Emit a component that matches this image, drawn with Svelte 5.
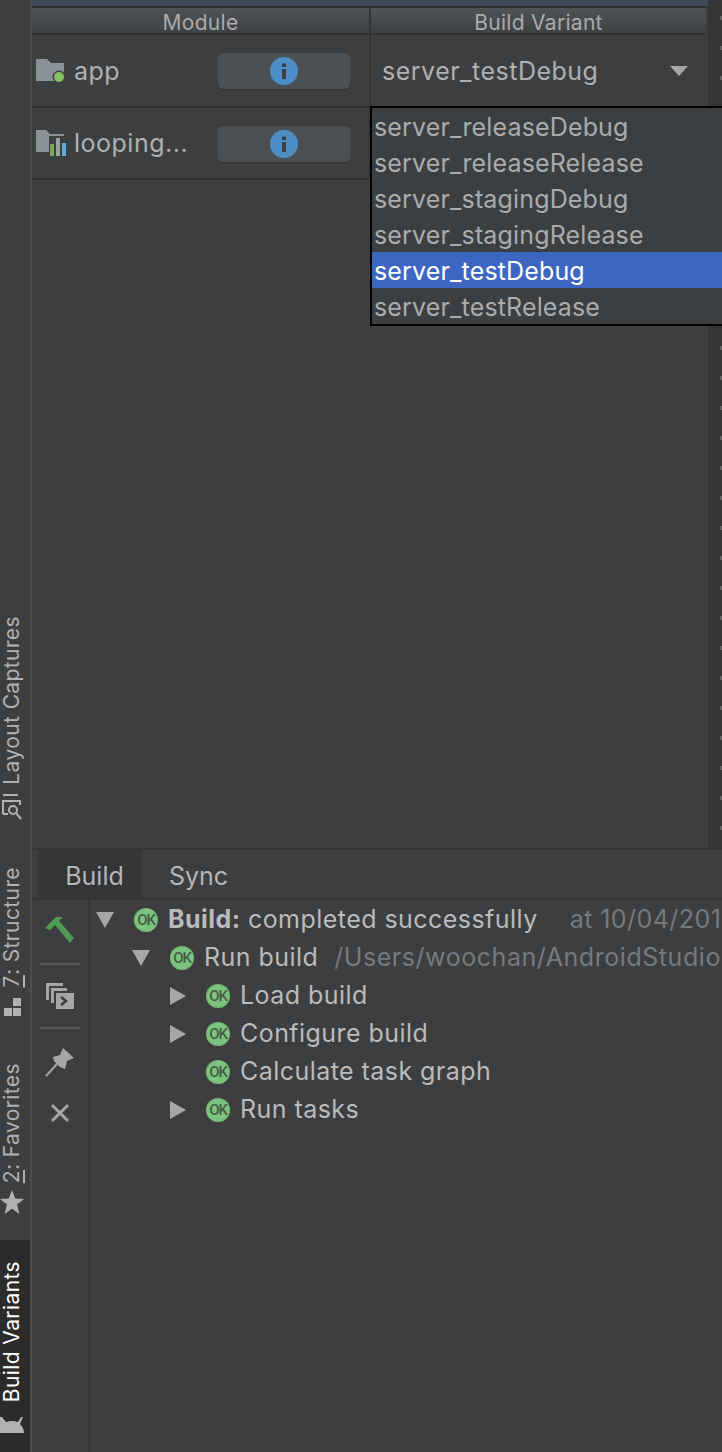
<script lang="ts">
  const variants = [
    'server_releaseDebug',
    'server_releaseRelease',
    'server_stagingDebug',
    'server_stagingRelease',
    'server_testDebug',
    'server_testRelease'
  ];
  const selected = 'server_testDebug';

  const tree = [
    { arrow: 'right', label: 'Load build' },
    { arrow: 'right', label: 'Configure build' },
    { arrow: '', label: 'Calculate task graph' },
    { arrow: 'right', label: 'Run tasks' }
  ];
</script>

{#snippet okBadge()}
  <span class="ok">OK</span>
{/snippet}

{#snippet infoButton()}
  <button class="info-btn" aria-label="info">
    <svg width="28" height="28" viewBox="0 0 28 28">
      <circle cx="14" cy="14" r="14" fill="#4b8fc6" />
      <rect x="12" y="6.5" width="4" height="3.5" fill="#3c3f41" />
      <rect x="12" y="12" width="4" height="10" fill="#3c3f41" />
    </svg>
  </button>
{/snippet}

{#snippet twisty(dir: string)}
  <svg class="twisty" width="20" height="20" viewBox="0 0 20 20">
    {#if dir === 'down'}
      <polygon points="1,2 19,2 10,18" fill="#a6a6a6" />
    {:else if dir === 'right'}
      <polygon points="3,1 19,10 3,19" fill="#a6a6a6" />
    {/if}
  </svg>
{/snippet}

<div class="window">
  <aside class="stripe">
    <div class="side-item captures">
      <svg width="24" height="26" viewBox="0 0 24 26" fill="none" stroke="#afb1b3" stroke-width="2">
        <path d="M3 1H18" />
        <path d="M3 20V7H20V11" />
        <path d="M3 20H8" />
        <circle cx="13" cy="16" r="4" />
        <path d="M16 19L21 25" />
      </svg>
      <span class="vtext">Layout Captures</span>
    </div>
    <div class="side-item structure">
      <svg width="20" height="18" viewBox="0 0 20 18" fill="#afb1b3">
        <rect x="2" y="10" width="8" height="8" />
        <rect x="11" y="10" width="8" height="8" />
        <rect x="11" y="0" width="8" height="8" />
      </svg>
      <span class="vtext"><u>7</u>: Structure</span>
    </div>
    <div class="side-item favorites">
      <svg width="24" height="25" viewBox="0 0 24 25" fill="#afb1b3">
        <polygon points="12,0 15.200,8.600 24,9 17,14.600 19.500,24 12,18.800 4.500,24 7,14.600 0,9 8.800,8.600" />
      </svg>
      <span class="vtext"><u>2</u>: Favorites</span>
    </div>
    <div class="side-item variants">
      <svg class="android" width="24" height="16" viewBox="0 0 24 16" fill="#afb1b3">
        <path d="M0 0L2 0L6 5C9 3.500 15 3.500 18 5L21 0L23 0L20 7C22 9 24 12 24 16L0 16Z" />
      </svg>
      <span class="vtext">Build Variants</span>
    </div>
  </aside>

  <main class="content">
    <div class="top-strip"></div>

    <section class="variants-panel">
      <div class="table">
        <div class="thead">
          <div class="th col-module">Module</div>
          <div class="th col-variant">Build Variant</div>
        </div>
        <div class="row">
          <div class="cell col-module">
            <svg class="folder" width="30" height="24" viewBox="0 0 30 24">
              <path d="M0 0H11L15 4H28V22H0Z" fill="#8a9199" />
              <circle cx="23" cy="18" r="6.500" fill="#3d3e40" />
              <circle cx="23" cy="18" r="5" fill="#87c060" />
            </svg>
            <span class="name">app</span>
            {@render infoButton()}
          </div>
          <div class="cell col-variant select-cell">
            <span>server_testDebug</span>
            <svg width="18" height="10" viewBox="0 0 18 10"><polygon points="0,0 18,0 9,10" fill="#a6a6a6" /></svg>
          </div>
        </div>
        <div class="row">
          <div class="cell col-module">
            <svg class="folder" width="30" height="26" viewBox="0 0 30 26">
              <path d="M0 0H10L14 4H28V6H13V22H0Z" fill="#8a9199" />
              <rect x="14" y="14" width="4" height="12" fill="#75a84f" />
              <rect x="20" y="8" width="4" height="18" fill="#9aa0a6" />
              <rect x="26" y="13" width="4" height="13" fill="#5aaed8" />
            </svg>
            <span class="name">looping...</span>
            {@render infoButton()}
          </div>
          <div class="cell col-variant"></div>
        </div>
      </div>
      <div class="scroll-gutter"></div>

      <ul class="dropdown">
        {#each variants as v}
          <li class:active={v === selected}>{v}</li>
        {/each}
      </ul>
    </section>

    <section class="build-panel">
      <div class="tabs">
        <div class="tab on">Build</div>
        <div class="tab">Sync</div>
      </div>
      <div class="build-body">
        <div class="toolbar">
          <svg class="hammer" width="32" height="30" viewBox="0 0 32 30">
            <path d="M1 13L12 2H19L15 6L30 23L26 28L11 10L6 15Z" fill="#4f9a55" />
          </svg>
          <div class="tool-sep"></div>
          <svg width="28" height="26" viewBox="0 0 28 26">
            <path d="M0 0H17V3H3V17H0Z" fill="#a6a6a6" />
            <path d="M5 5H21V8H8V20H5Z" fill="#a6a6a6" />
            <rect x="10" y="10" width="18" height="16" fill="#a6a6a6" />
            <path d="M15 14L20 18L15 22" fill="none" stroke="#3c3f41" stroke-width="2.500" />
          </svg>
          <div class="tool-sep"></div>
          <svg width="30" height="30" viewBox="0 0 30 30">
            <path d="M18 1L29 11L22 14L20 22L15 20L9 14L8 10L15 8Z" fill="#a6a6a6" />
            <path d="M12 17L1 29" stroke="#a6a6a6" stroke-width="2" />
          </svg>
          <svg class="close" width="20" height="20" viewBox="0 0 20 20">
            <path d="M2 2L18 18M18 2L2 18" stroke="#a6a6a6" stroke-width="3" />
          </svg>
        </div>
        <div class="tree">
          <div class="node lvl0">
            {@render twisty('down')}
            {@render okBadge()}
            <span class="lbl"><b>Build:</b> completed successfully</span>
            <span class="dim when">at 10/04/201</span>
          </div>
          <div class="node lvl1">
            {@render twisty('down')}
            {@render okBadge()}
            <span class="lbl">Run build</span>
            <span class="dim path">/Users/woochan/AndroidStudio</span>
          </div>
          {#each tree as t}
            <div class="node lvl2">
              {@render twisty(t.arrow)}
              {@render okBadge()}
              <span class="lbl">{t.label}</span>
            </div>
          {/each}
        </div>
      </div>
    </section>
  </main>
</div>

<style>
  :global(body) {
    margin: 0;
    background: #3d3e40;
  }

  .window {
    display: flex;
    width: 722px;
    height: 1452px;
    overflow: hidden;
    background: #3d3e40;
    color: #bbbbbb;
    font-family: Inter, "Liberation Sans", sans-serif;
    font-size: 25px;
  }

  .stripe {
    flex: none;
    width: 30px;
    box-sizing: content-box;
    display: flex;
    flex-direction: column;
    justify-content: flex-end;
    border-right: 2px solid #4b4d4f;
  }

  .side-item {
    display: flex;
    flex-direction: column-reverse;
    align-items: center;
    gap: 10px;
    padding-right: 7px;
    font-size: 21px;
    letter-spacing: 0.4px;
    color: #afb1b3;
  }

  .vtext {
    writing-mode: vertical-rl;
    transform: rotate(180deg);
    line-height: 22px;
    white-space: nowrap;
  }

  .captures {
    margin-bottom: 47px;
  }

  .structure {
    margin-bottom: 47px;
  }

  .favorites {
    margin-bottom: 25px;
    gap: 7px;
  }

  .variants {
    height: 212px;
    gap: 15px;
    background: #2b2b2b;
    color: #ffffff;
    justify-content: flex-start;
    padding-bottom: 0;
  }

  .android {
    margin-bottom: 19px;
  }

  .content {
    flex: 1;
    min-width: 0;
    display: flex;
    flex-direction: column;
  }

  .top-strip {
    flex: none;
    width: 676px;
    height: 6px;
    background: #3e4a59;
    border-bottom: 2px solid #2e2f31;
  }

  .variants-panel {
    position: relative;
    flex: 1;
    display: flex;
    min-height: 0;
  }

  .table {
    flex: none;
    width: 674px;
  }

  .scroll-gutter {
    flex: 1;
    margin: -8px 0 0 2px;
    background: repeating-linear-gradient(transparent 0 16px, #5e5f61 16px 20px, transparent 20px 30px) right top / 2px 100% no-repeat, #343537;
  }

  .thead {
    display: flex;
    height: 25px;
    border-bottom: 2px solid #2f3032;
    background: linear-gradient(#505355, #3f4244);
  }

  .th {
    display: flex;
    align-items: center;
    justify-content: center;
    padding-top: 3px;
    font-size: 21px;
    letter-spacing: 0.3px;
    color: #a9abad;
  }

  .col-module {
    flex: none;
    width: 337px;
    box-sizing: border-box;
  }

  .col-variant {
    flex: 1;
    border-left: 2px solid #323436;
  }

  .row {
    display: flex;
    height: 71px;
    border-bottom: 2px solid #2f3032;
  }

  .row + .row {
    height: 70px;
  }

  .cell {
    display: flex;
    align-items: center;
    color: #aeb0b2;
    letter-spacing: 0.5px;
  }

  .cell.col-module {
    padding-left: 4px;
    gap: 8px;
  }

  .name {
    flex: 1;
  }

  .info-btn {
    width: 132px;
    height: 36px;
    margin: 1px 19px 0 0;
    padding: 0;
    border: none;
    border-radius: 5px;
    background: #4c5052;
    box-shadow: 0 2px 0 #353739;
    display: flex;
    align-items: center;
    justify-content: center;
  }

  .select-cell {
    justify-content: space-between;
    padding: 0 18px 0 11px;
  }

  .dropdown {
    position: absolute;
    left: 338px;
    top: 98px;
    width: 352px;
    margin: 0;
    padding: 0;
    list-style: none;
    background: #3c3f41;
    border: 2px solid #000000;
    color: #a9abad;
    letter-spacing: 0.15px;
  }

  .dropdown li {
    height: 36px;
    line-height: 38px;
    padding-left: 2px;
    white-space: nowrap;
  }

  .dropdown li.active {
    background: #3d66c2;
    color: #ffffff;
  }

  .build-panel {
    flex: none;
    height: 602px;
    display: flex;
    flex-direction: column;
    border-top: 2px solid #323436;
  }

  .tabs {
    flex: none;
    display: flex;
    height: 48px;
    padding-left: 6px;
    border-bottom: 2px solid #323436;
  }

  .tab {
    width: 104px;
    box-sizing: border-box;
    padding: 3px 0 0 9px;
    display: flex;
    align-items: center;
    justify-content: center;
    color: #b4b6b8;
  }

  .tab.on {
    background: #333537;
  }

  .build-body {
    flex: 1;
    display: flex;
    min-height: 0;
  }

  .toolbar {
    flex: none;
    width: 58px;
    box-sizing: border-box;
    display: flex;
    flex-direction: column;
    align-items: center;
    padding-top: 15px;
    border-right: 2px solid #323436;
  }

  .tool-sep {
    width: 40px;
    height: 2px;
    margin: 18px 0;
    background: #555759;
  }

  .close {
    margin-top: 26px;
  }

  .tree {
    flex: 1;
    min-width: 0;
    overflow: hidden;
    padding-top: 1px;
    letter-spacing: 0.45px;
  }

  .node {
    height: 38px;
    display: flex;
    align-items: center;
    white-space: nowrap;
  }

  .lvl0 {
    padding-left: 5px;
  }

  .lvl1 {
    padding-left: 41px;
  }

  .lvl2 {
    padding-left: 77px;
  }

  .twisty {
    flex: none;
    margin-right: 19px;
  }

  .ok {
    flex: none;
    width: 24px;
    height: 24px;
    margin-right: 10px;
    border-radius: 50%;
    background: #7cc47d;
    box-shadow: inset 0 0 2px #5aa05c;
    color: #465c48;
    font-family: Roboto, sans-serif;
    font-size: 15px;
    font-weight: 500;
    letter-spacing: -1.2px;
    line-height: 24px;
    text-align: center;
  }

  .lbl,
  .dim {
    margin-bottom: 2px;
  }

  .lbl b {
    color: #bbbbbb;
  }

  .dim {
    color: #767a7d;
  }

  .when {
    margin-left: 32px;
  }

  .path {
    margin-left: 16px;
    letter-spacing: 0.55px;
  }
</style>
